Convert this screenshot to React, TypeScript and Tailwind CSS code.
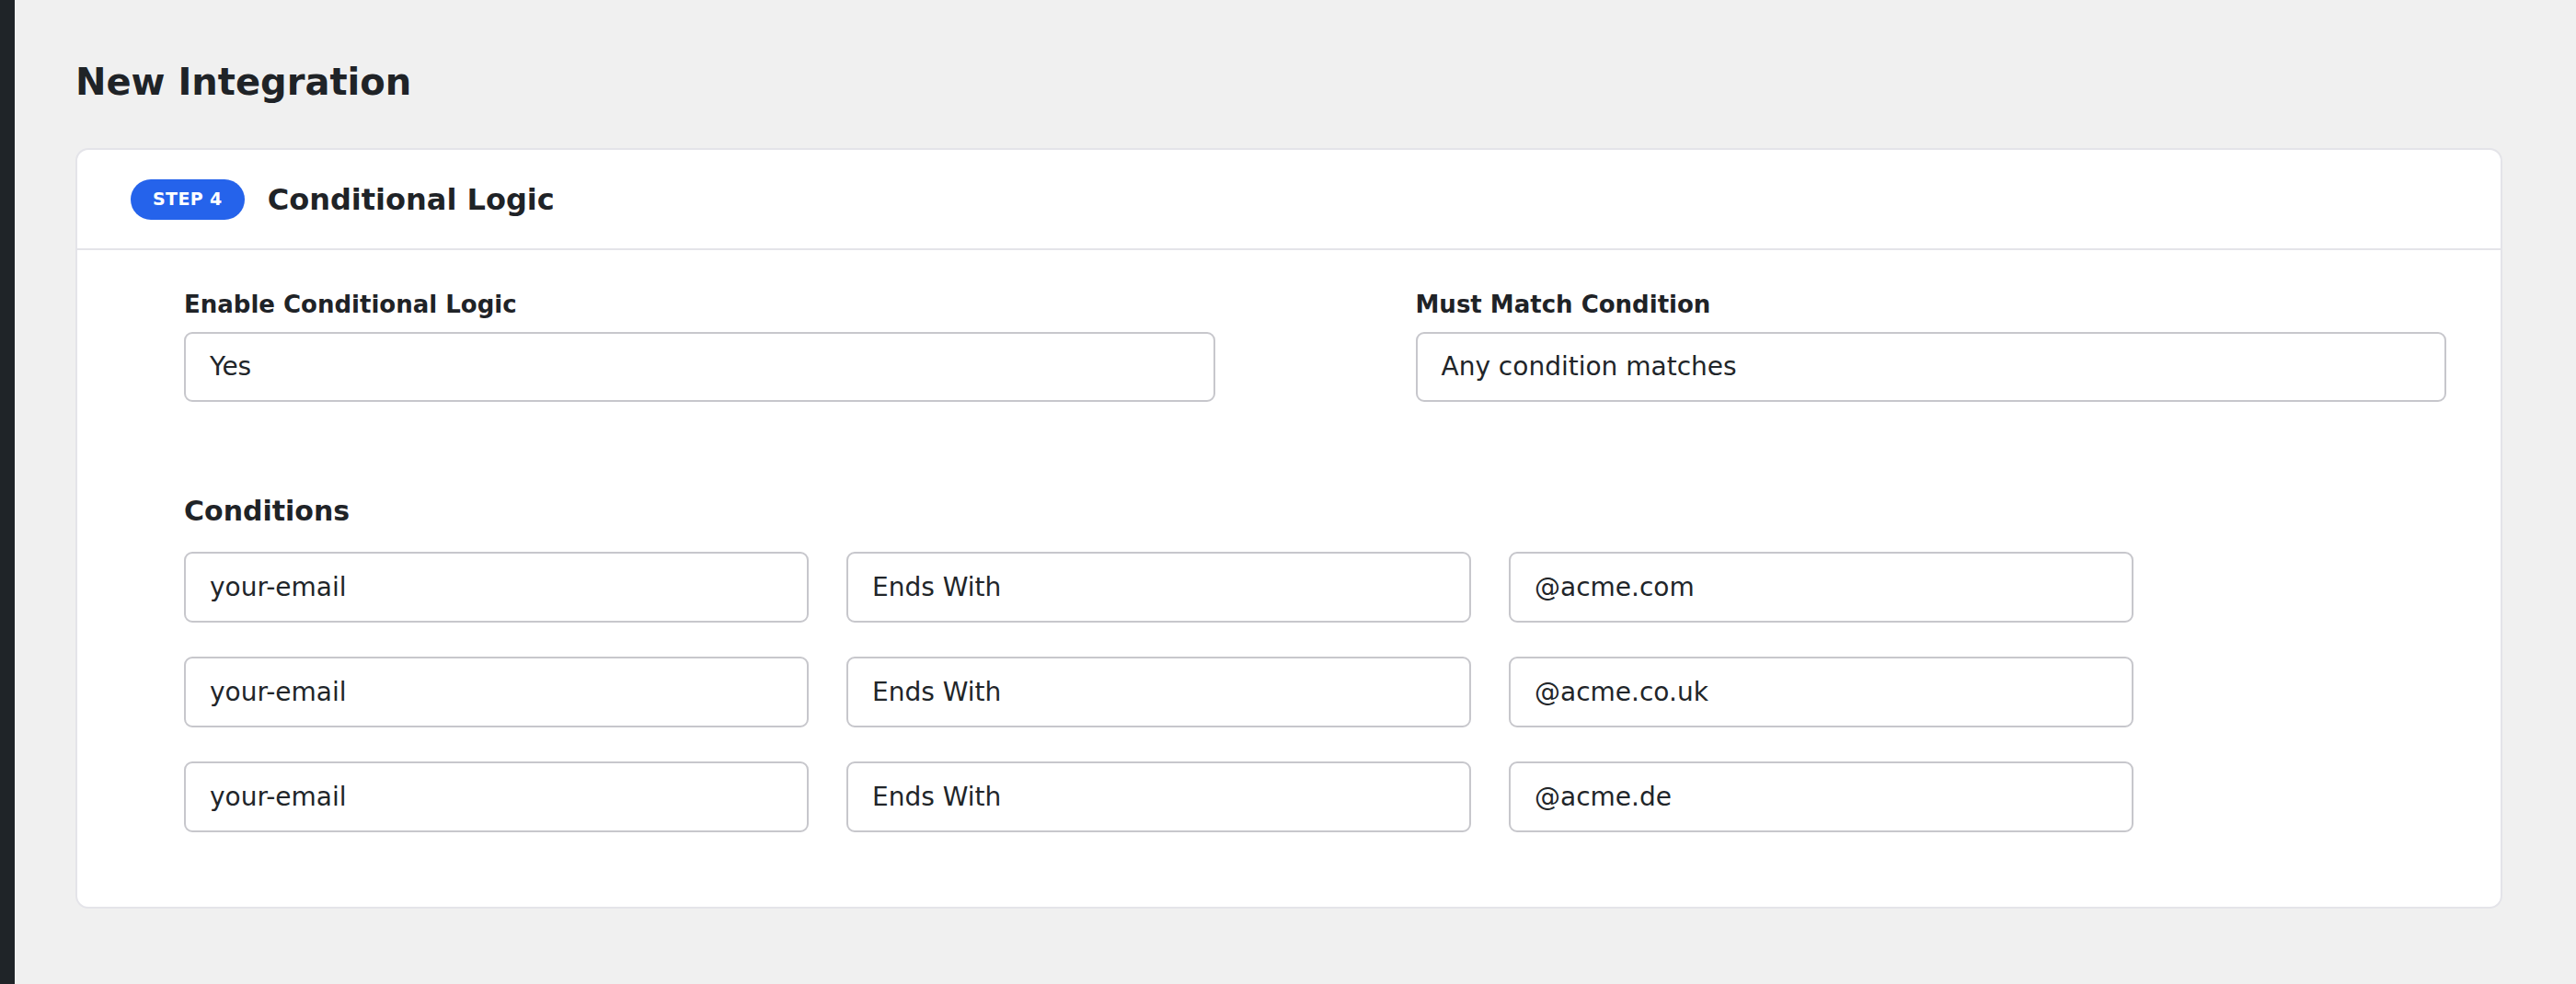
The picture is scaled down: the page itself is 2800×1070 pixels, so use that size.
const field =
  'flex w-full items-center rounded-[9px] border-2 border-[#c7c7cc] bg-white px-[26px] text-[28px] text-[#212529]';

const conditions = [
  { field: 'your-email', op: 'Ends With', value: '@acme.com' },
  { field: 'your-email', op: 'Ends With', value: '@acme.co.uk' },
  { field: 'your-email', op: 'Ends With', value: '@acme.de' },
];

function Field({ value, tall }: { value: string; tall?: boolean }) {
  return <div className={`${field} ${tall ? 'h-[77px]' : 'h-[76px]'}`}>{value}</div>;
}

export default function App() {
  return (
    <div className="flex min-h-screen bg-[#f0f0f0] font-['DejaVu_Sans',sans-serif] text-[#1f2327]">
      <div className="w-[16px] shrink-0 bg-[#1f2428]" />

      <main className="flex-1 pl-[66px] pr-[80px] pt-[65px]">
        <h1 className="text-[40px] font-bold leading-[48px]">New Integration</h1>

        <section className="mt-[48px] rounded-[14px] border-2 border-[#e4e4e9] bg-white">
          <header className="flex h-[109px] items-center gap-[25px] border-b-2 border-[#e4e4e9] pl-[58px]">
            <span className="flex h-[44px] items-center rounded-full bg-[#2563eb] px-[24px] text-[19px] font-bold tracking-[0.02em] text-white">
              STEP 4
            </span>
            <h2 className="text-[32px] font-bold">Conditional Logic</h2>
          </header>

          <div className="pb-[81px] pl-[116px] pr-[59px] pt-[43px]">
            <div className="grid grid-cols-2 gap-x-[218px]">
              <div>
                <label className="block text-[26px] font-bold leading-[32px]">Enable Conditional Logic</label>
                <div className="mt-[14px]">
                  <Field value="Yes" />
                </div>
              </div>
              <div>
                <label className="block text-[26px] font-bold leading-[32px]">Must Match Condition</label>
                <div className="mt-[14px]">
                  <Field value="Any condition matches" />
                </div>
              </div>
            </div>

            <h3 className="mt-[101px] text-[30px] font-bold leading-[36px]">Conditions</h3>

            <div className="mt-[26px] grid w-[2119px] grid-cols-3 gap-x-[41px] gap-y-[37px]">
              {conditions.map((c, i) => (
                <div key={i} className="contents">
                  <Field tall value={c.field} />
                  <Field tall value={c.op} />
                  <Field tall value={c.value} />
                </div>
              ))}
            </div>
          </div>
        </section>
      </main>
    </div>
  );
}
